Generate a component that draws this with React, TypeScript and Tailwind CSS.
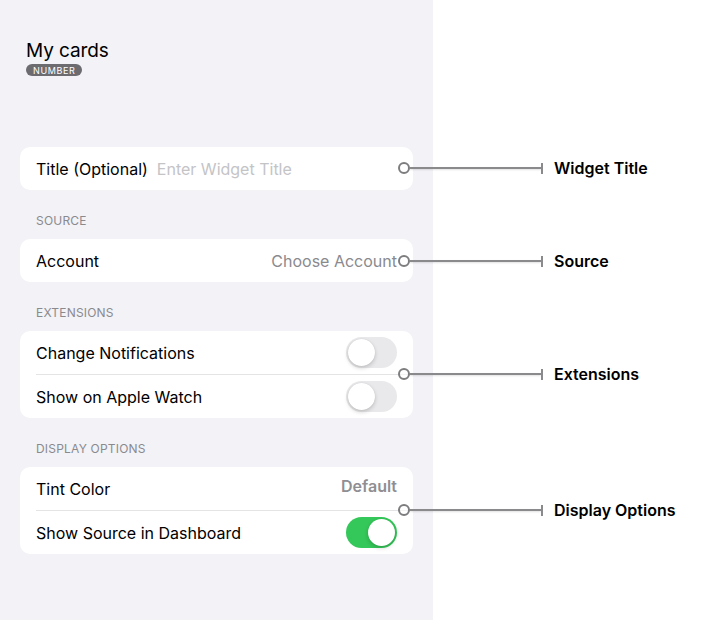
import { ReactNode } from 'react'

const font = { fontFamily: 'Inter, "Noto Sans", sans-serif' }

function Toggle({ on }: { on?: boolean }) {
  return (
    <div
      className={`w-[51px] h-[31px] rounded-full p-[2px] flex ${
        on ? 'bg-[#34c759] justify-end' : 'bg-[#e9e9eb] justify-start'
      }`}
    >
      <div className="w-[27px] h-[27px] rounded-full bg-white shadow-[0_2px_4px_rgba(0,0,0,0.18),0_0_1px_rgba(0,0,0,0.12)]" />
    </div>
  )
}

function Row({ children, className = 'h-[43px]' }: { children: ReactNode; className?: string }) {
  return <div className={`flex items-center justify-between px-4 ${className}`}>{children}</div>
}

function Divider() {
  return <div className="ml-4 h-px bg-[#e4e4e7]" />
}

function SectionLabel({ children }: { children: ReactNode }) {
  return (
    <div className="px-4 pt-[23px] pb-[10px] text-[12px] leading-[16px] tracking-[0.2px] text-[#8a8a8e]">
      {children}
    </div>
  )
}

function Card({ children }: { children: ReactNode }) {
  return <div className="bg-white rounded-[10px] overflow-hidden">{children}</div>
}

function Callout({ label, className }: { label: string; className: string }) {
  return (
    <div className={`absolute left-[398px] flex items-center ${className}`}>
      <div className="w-[12px] h-[12px] rounded-full border-2 border-[#7d7d80] bg-white/60" />
      <div className="w-[131px] h-[2px] bg-[#8a8a8d] shadow-[0_1px_2px_rgba(0,0,0,0.12)]" />
      <div className="w-[2px] h-[11px] bg-[#8a8a8d]" />
      <div className="ml-[11px] text-[16px] font-semibold text-black">{label}</div>
    </div>
  )
}

export default function App() {
  return (
    <div className="relative w-[722px] h-[620px] flex bg-white text-black" style={font}>
      <div className="w-[433px] h-full bg-[#f2f2f7] px-5 pt-[39px]">
        <div className="px-[6px]">
          <div className="text-[19px] leading-[24px] font-normal tracking-[-0.1px]">My cards</div>
          <div className="mt-[1px] flex w-fit items-center h-[12px] px-[7px] rounded-full bg-[#6c6c70] text-white text-[9px] leading-none tracking-[0.6px]">
            NUMBER
          </div>
        </div>

        <div className="mt-[71px]">
          <Card>
            <Row className="h-[43px] justify-start gap-[9px]">
              <span className="text-[16px]">Title (Optional)</span>
              <span className="text-[16px] text-[#c4c4c7]">Enter Widget Title</span>
            </Row>
          </Card>
        </div>

        <SectionLabel>SOURCE</SectionLabel>
        <Card>
          <Row>
            <span className="text-[16px]">Account</span>
            <span className="text-[16px] text-[#8a8a8e]">Choose Account</span>
          </Row>
        </Card>

        <SectionLabel>EXTENSIONS</SectionLabel>
        <Card>
          <Row>
            <span className="text-[16px]">Change Notifications</span>
            <Toggle />
          </Row>
          <Divider />
          <Row>
            <span className="text-[16px]">Show on Apple Watch</span>
            <Toggle />
          </Row>
        </Card>

        <SectionLabel>DISPLAY OPTIONS</SectionLabel>
        <Card>
          <Row>
            <span className="text-[16px]">Tint Color</span>
            <span className="mb-[6px] text-[16px] font-semibold text-[#8e8e93]">Default</span>
          </Row>
          <Divider />
          <Row>
            <span className="text-[16px]">Show Source in Dashboard</span>
            <Toggle on />
          </Row>
        </Card>
      </div>
      <div className="flex-1" />

      <Callout label="Widget Title" className="top-[156px]" />
      <Callout label="Source" className="top-[249px]" />
      <Callout label="Extensions" className="top-[362px]" />
      <Callout label="Display Options" className="top-[498px]" />
    </div>
  )
}
